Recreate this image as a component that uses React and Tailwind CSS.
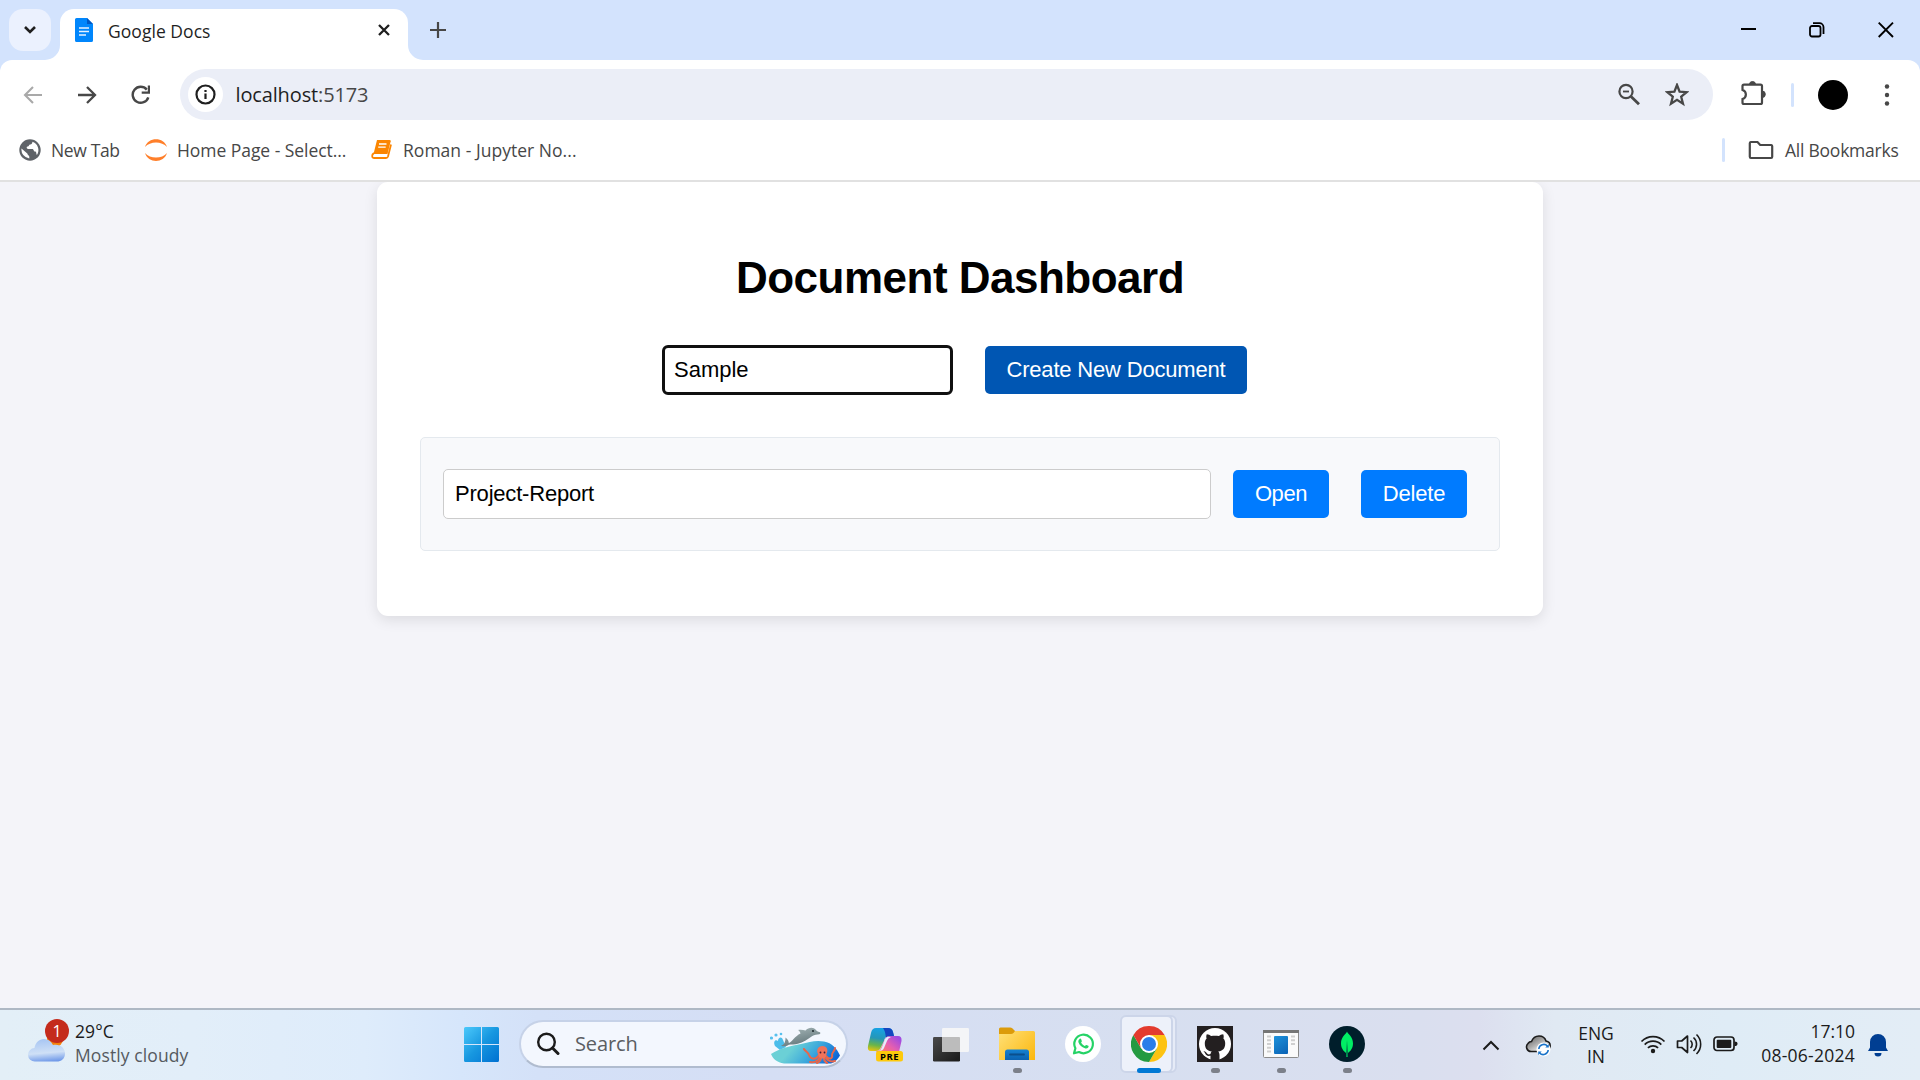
import React from "react";

const UI = "font-['Open_Sans',sans-serif]";

function Svg({ w, h, className = "", children }) {
  return (
    <svg
      width={w}
      height={h}
      viewBox={`0 0 ${w} ${h}`}
      fill="none"
      className={`shrink-0 ${className}`}
    >
      {children}
    </svg>
  );
}

function TabStrip() {
  return (
    <div className="flex h-[60px] items-start bg-[#d3e3fd] pt-[9px]">
      <button className="ml-[9px] flex size-[42px] items-center justify-center rounded-[14px] bg-[#ebf1fe]">
        <Svg w={12} h={8}>
          <path d="M1 1l5 5 5-5" stroke="#1f1f1f" strokeWidth="2.6" />
        </Svg>
      </button>

      <div className="relative ml-[9px] flex h-[51px] w-[348px] items-start rounded-t-[14px] bg-white">
        <Svg w={15} h={15} className="absolute -left-[15px] bottom-0">
          <path d="M15 0v15H0A15 15 0 0 0 15 0z" fill="#fff" />
        </Svg>
        <Svg w={15} h={15} className="absolute -right-[15px] bottom-0">
          <path d="M0 0v15h15A15 15 0 0 1 0 0z" fill="#fff" />
        </Svg>
        <Svg w={18} h={24} className="ml-[15px] mt-[9px]">
          <path d="M1.6 0H12l6 6v16.400a1.600 1.600 0 0 1-1.600 1.600H1.600A1.600 1.600 0 0 1 0 22.400V1.600A1.600 1.600 0 0 1 1.600 0z" fill="#0086fc" />
          <path d="M12 0l6 6h-6z" fill="#0057c2" />
          <path d="M4 10h10M4 13.500h10M4 17h7" stroke="#e6f2ff" strokeWidth="1.500" />
        </Svg>
        <span className="ml-[15px] mt-[9px] w-[249px] whitespace-nowrap text-[17.5px] leading-[26px] tracking-[0.04px] text-[#1f1f1f]">
          Google Docs
        </span>
        <Svg w={12} h={12} className="ml-[21px] mt-[15px]">
          <path d="M1 1l10 10M11 1L1 11" stroke="#1f1f1f" strokeWidth="2.3" />
        </Svg>
      </div>

      <Svg w={16} h={16} className="ml-[22px] mt-[13px]">
        <path d="M8 0v16M0 8h16" stroke="#474747" strokeWidth="2.200" />
      </Svg>

      <div className="ml-auto mr-[26px] flex items-start pt-[13px]">
        <Svg w={15} h={16}>
          <path d="M0 7h15" stroke="#000" strokeWidth="2" />
        </Svg>
        <Svg w={16} h={16} className="ml-[53px]">
          <rect x="1" y="4" width="10.500" height="10.500" rx="2" stroke="#000" strokeWidth="1.800" />
          <path d="M4 1.200h6.500A4 4 0 0 1 14.500 5v7" stroke="#000" strokeWidth="1.800" />
        </Svg>
        <Svg w={16} h={16} className="ml-[53px]">
          <path d="M.7.700l14.300 14.300M15 .700L.700 15" stroke="#000" strokeWidth="1.900" />
        </Svg>
      </div>
    </div>
  );
}

function AddressBar() {
  return (
    <div className="bg-[#d3e3fd]">
      <div className="flex h-[69px] items-center rounded-t-[12px] bg-white">
        <Svg w={20} h={18} className="ml-[23px]">
          <path d="M19 9H2.500M10 1L2 9l8 8" stroke="#a9a9a9" strokeWidth="2.100" />
        </Svg>
        <Svg w={20} h={18} className="ml-[34px]">
          <path d="M1 9h16.500M10 1l8 8-8 8" stroke="#474747" strokeWidth="2.300" />
        </Svg>
        <Svg w={20} h={20} className="ml-[34px]">
          <path d="M17.300 12.300A8 8 0 1 1 15.800 4.600" stroke="#474747" strokeWidth="2.400" />
          <path d="M17.900.500v7.200h-7.200" stroke="#474747" strokeWidth="2.200" />
        </Svg>
        <div className="ml-[29px] flex h-[51px] w-[1533px] items-center rounded-full bg-[#ebeef7]">
          <div className="ml-[8px] flex size-[35px] items-center justify-center rounded-full bg-white">
            <Svg w={21} h={21}>
              <circle cx="10.500" cy="10.500" r="9" stroke="#1f1f1f" strokeWidth="2.200" />
              <path d="M10.500 9.500V15M10.500 6v2" stroke="#1f1f1f" strokeWidth="2.200" />
            </Svg>
          </div>
          <span className="ml-[12.5px] mt-[0px] whitespace-nowrap text-[20px] leading-[28px] tracking-[-0.14px] text-[#1f1f1f]">
            localhost<span className="text-[#474747]">:5173</span>
          </span>
          <Svg w={24} h={24} className="ml-auto">
            <circle cx="9" cy="8.500" r="6.600" stroke="#474747" strokeWidth="2.200" />
            <path d="M14 13.500l8 7.800" stroke="#474747" strokeWidth="2.800" />
            <path d="M6 8.500h6" stroke="#474747" strokeWidth="1.800" />
          </Svg>
          <Svg w={24} h={24} className="ml-[24px] mr-[24px]">
            <path
              d="M12 2l2.600 6.700 7 .500-5.400 4.500 1.800 7L12 16.900l-6 3.800 1.800-7L2.400 9.200l7-.500z"
              stroke="#474747"
              strokeWidth="2.300"
            />
          </Svg>
        </div>
        <Svg w={26} h={26} className="ml-[27px] -mt-[4px]">
          <path
            d="M5 4.600h15.500a1.500 1.500 0 0 1 1.500 1.500V22.500a1.500 1.500 0 0 1-1.500 1.500H4a1.500 1.500 0 0 1-1.500-1.500V19c4.500-1.500 4.500-7.500 0-9V6.100A1.500 1.500 0 0 1 4 4.600z"
            stroke="#474747"
            strokeWidth="2.200"
          />
          <path d="M9.500 4.500a3 3 0 0 1 6 0zM22 11a3.300 3.300 0 0 1 0 6.600z" fill="#474747" stroke="#474747" />
        </Svg>
        <div className="ml-[25px] h-[24px] w-[3px] rounded-full bg-[#d3e3fd]" />
        <div className="ml-[24px] size-[30px] rounded-full bg-black" />
        <Svg w={6} h={22} className="ml-[36px]">
          <circle cx="3" cy="2.500" r="2.200" fill="#474747" />
          <circle cx="3" cy="11" r="2.200" fill="#474747" />
          <circle cx="3" cy="19.500" r="2.200" fill="#474747" />
        </Svg>
      </div>
    </div>
  );
}

function BookmarksBar() {
  return (
    <div className="flex h-[53px] items-center border-b-2 border-[#e1e1e1] bg-white pb-[10px] text-[17.5px] leading-[24px] whitespace-nowrap text-[#474747]">
      <Svg w={22} h={22} className="ml-[19px]">
        <circle cx="11" cy="11" r="10.700" fill="#5f6368" />
        <path
          d="M2.500 9.500L8 14.300c.900.800.500 1.700 1.600 2.100.900.300.700 2 .700 3A8.700 8.700 0 0 1 2.500 9.500zM13.300 2.700c.300 1.700-.600 2.600-2 2.700-1.700.100-1 2-2.700 2-1.500.100-1.100 2.500.600 2.500h4c1.800 0 1.200 2.700 2.900 2.700 1.500 0 1 2.500 1.800 3.300a8.700 8.700 0 0 0-4.600-13.200z"
          fill="#fff"
        />
      </Svg>
      <span className="ml-[10px] w-[83px] tracking-[-0.35px]">New Tab</span>
      <Svg w={24} h={24} className="ml-[10px]">
        <path d="M1 9C4-1.500 20-1.500 23 9 18 3 6 3 1 9zM1 15c3 10.500 19 10.500 22 0-5 6-17 6-22 0z" fill="#ff7f2a" />
      </Svg>
      <span className="ml-[9px] w-[184px] tracking-[-0.05px]">Home Page - Select...</span>
      <Svg w={21} h={19} className="ml-[10px]">
        <path d="M6 0h12.500q1.500 0 1.200 1.300L16.500 14H2.500z" fill="#fb8500" />
        <path d="M3 13l-1.500 1.500Q.500 18 3 18H15q1.500 0 2-1.500L20 4.500" stroke="#fb8500" strokeWidth="1.800" />
        <path d="M8 4h7.500M7.200 7.200h7.500" stroke="#fff" strokeWidth="1.300" />
      </Svg>
      <span className="ml-[11px] tracking-[0.03px]">Roman - Jupyter No...</span>
      <div className="ml-auto h-[24px] w-[3px] rounded-full bg-[#d3e3fd]" />
      <Svg w={26} h={20} className="ml-[23px]">
        <path
          d="M2.800 2h6.700l2.700 3h11A1.300 1.300 0 0 1 24.200 6.300v10.400A1.300 1.300 0 0 1 23 18H3a1.300 1.300 0 0 1-1.200-1.300V3.300A1.200 1.200 0 0 1 2.800 2z"
          stroke="#474747"
          strokeWidth="2.200"
        />
      </Svg>
      <span className="ml-[11px] w-[135px] tracking-[-0.24px]">All Bookmarks</span>
    </div>
  );
}

function Dashboard() {
  return (
    <main className="h-[826px] overflow-hidden bg-[#f4f4f9] font-['Liberation_Sans',sans-serif] text-black">
      <section className="mx-auto h-[434px] w-[1166px] rounded-[11px] bg-white px-[43px] pt-[71px] shadow-[0_4px_14px_rgba(0,0,0,0.1)]">
        <h1 className="text-center text-[44px] font-bold leading-[50px] tracking-[-0.5px]">Document Dashboard</h1>
        <div className="mt-[42px] flex items-start pl-[242px]">
          <div className="flex h-[50px] w-[291px] items-center rounded-[6px] border-[3px] border-[#101010] bg-white pl-[9px] text-[22px] leading-[26px]">
            Sample
          </div>
          <button className="ml-[32px] mt-[1px] h-[48px] w-[262px] rounded-[5px] bg-[#0056b3] text-[22px] leading-[26px] tracking-[-0.18px] text-white">
            Create New Document
          </button>
        </div>
        <div className="mt-[42px] flex h-[114px] items-center rounded-[5px] border border-[#e4e9ee] bg-[#f8f9fb] pl-[22px]">
          <div className="flex h-[50px] w-[768px] items-center rounded-[5px] border border-[#ccc] bg-white pl-[11px] text-[22px] leading-[26px] tracking-[-0.2px]">
            Project-Report
          </div>
          <button className="ml-[22px] h-[48px] w-[96px] rounded-[5px] bg-[#007bff] text-[22px] leading-[26px] tracking-[-0.4px] text-white">
            Open
          </button>
          <button className="ml-[32px] h-[48px] w-[106px] rounded-[5px] bg-[#007bff] text-[22px] leading-[26px] tracking-[-0.15px] text-white">
            Delete
          </button>
        </div>
      </section>
    </main>
  );
}

function WindowsLogo() {
  return (
    <Svg w={35} h={35}>
      <defs>
        <linearGradient id="win" x1="0" y1="0" x2="35" y2="35" gradientUnits="userSpaceOnUse">
          <stop stopColor="#4cc9fb" />
          <stop offset="0.5" stopColor="#1797e0" />
          <stop offset="1" stopColor="#0070d1" />
        </linearGradient>
      </defs>
      <path d="M1.500 0H17v17H0V1.500Q0 0 1.500 0zM18 0h15.500Q35 0 35 1.500V17H18zM0 18h17v17H1.500Q0 35 0 33.500zM18 18h17v15.500q0 1.500-1.500 1.500H18z" fill="url(#win)" />
    </Svg>
  );
}

function OceanArt() {
  return (
    <Svg w={70} h={37}>
      <defs>
        <linearGradient id="sea" x1="30" y1="12" x2="60" y2="38" gradientUnits="userSpaceOnUse">
          <stop stopColor="#6bd0d6" />
          <stop offset="0.5" stopColor="#3aa6dc" />
          <stop offset="1" stopColor="#0d66d6" />
        </linearGradient>
        <linearGradient id="dol" x1="30" y1="0" x2="34" y2="18" gradientUnits="userSpaceOnUse">
          <stop stopColor="#9fb0b2" />
          <stop offset="1" stopColor="#66797d" />
        </linearGradient>
      </defs>
      <path d="M5 19C3 15 5 12 8 14c0-4 4-5 5-1l3 7-6 3z" fill="#4cbdea" />
      <circle cx="1.500" cy="11" r="1.600" fill="#57c0ee" />
      <circle cx="6" cy="8" r="1.600" fill="#57c0ee" />
      <circle cx="11" cy="7" r="1.300" fill="#57c0ee" />
      <path d="M1 27c9-6 20-8 30-10 8-2 15-4 23-2.500 8 1.500 13 7 16 14-2 4-6 7-9 8H14C7 35.500 3 32 1 27z" fill="url(#sea)" />
      <path
        d="M11 18.500c3-.500 4.500-3 4.500-8 2 1.500 3.300 3.500 3.300 5.500C22 15 25 9 30.500 6.500 30 4.500 29 3.500 28 3c2.500-.500 5-.300 7.500.500C38.500.500 43-.500 46 3c.800 1.300 1.600 1.700 3.500 2 1.200.300 1.200 1.800-.200 2.200-2.500.500-4.800.500-7 1.800-5 3.500-9 6.500-14.500 7.700-3 .700-6.500.700-9 1-2.500 1.600-5.500 2.300-7.800.800z"
        fill="url(#dol)"
      />
      <circle cx="43" cy="4" r="1.100" fill="#1f2c30" />
      <path
        d="M49 28c-3 5-8 5-10 0-1-3-4-4-5-6M50 30c-2 4-6 6-10 5M56 29c3 4 7 3 6-1 0-3 3-4 3-7M56 31c2 3 6 4 9 3M51 31c0 3-2 4-4 5M54 31c0 3 1 4 3 5"
        stroke="#e8664a"
        strokeWidth="2"
        strokeLinecap="round"
      />
      <path d="M48 27c-2-4 0-8 4.500-8s6 4 4 8c-.500 3-1 4.500-4 4.500S49 30 48 27z" fill="#f0735a" />
      <circle cx="50.500" cy="25.500" r="0.900" fill="#3b1c3c" />
      <circle cx="54.500" cy="25.500" r="0.900" fill="#3b1c3c" />
    </Svg>
  );
}

function CopilotIcon() {
  return (
    <div className="relative h-[35px] w-[36px]">
      <Svg w={36} h={35}>
        <defs>
          <linearGradient id="cpA" x1="10" y1="0" x2="6" y2="24" gradientUnits="userSpaceOnUse">
            <stop stopColor="#16a3e8" />
            <stop offset="0.45" stopColor="#2597b8" />
            <stop offset="0.75" stopColor="#69b54a" />
            <stop offset="1" stopColor="#e9c40d" />
          </linearGradient>
          <linearGradient id="cpB" x1="30" y1="10" x2="16" y2="27" gradientUnits="userSpaceOnUse">
            <stop stopColor="#a14be0" />
            <stop offset="0.5" stopColor="#e55fb0" />
            <stop offset="1" stopColor="#ff7d62" />
          </linearGradient>
        </defs>
        <path d="M9 1h12q4 0 5 4l1 4h-5q-4 0-5 5l-4 8q-1 2-4 2H4q-4 0-3-5L4 6q1-5 5-5z" fill="url(#cpA)" />
        <path d="M16 1h5q4 0 5 4l1 4h-4q-3 0-4 2-1-8-3-10z" fill="#1546c0" />
        <path d="M24 9h7q4 0 3.500 5L32 25H11q-2 0-2-1 3 0 4-1l5-11q1-3 6-3z" fill="url(#cpB)" />
        <path d="M20 10h4q-3 1-4 4l-3 7q-1 3-5 3 2-1 3-4l3-8z" fill="#e6ecfa" />
        <rect x="9" y="24" width="27" height="10.500" rx="2.500" fill="#fdc90b" />
      </Svg>
      <span className="absolute left-[9px] top-[24px] w-[27px] text-center text-[9.5px] font-bold leading-[11px] tracking-[0.4px] text-black">PRE</span>
    </div>
  );
}

function TaskViewIcon() {
  return (
    <Svg w={36} h={35}>
      <defs>
        <linearGradient id="tvD" x1="0" y1="10" x2="20" y2="35" gradientUnits="userSpaceOnUse">
          <stop stopColor="#4a4a4a" />
          <stop offset="1" stopColor="#1e1e1e" />
        </linearGradient>
      </defs>
      <rect x="0" y="10" width="27" height="24.500" rx="1.200" fill="url(#tvD)" />
      <rect x="9" y="1" width="27" height="24" rx="1.200" fill="#f7f7f7" opacity="0.9" />
      <path d="M9 10h17q1 0 1 1v14H10q-1 0-1-1z" fill="#bcbcbc" />
    </Svg>
  );
}

function FolderIcon() {
  return (
    <Svg w={36} h={34}>
      <defs>
        <linearGradient id="fold" x1="2" y1="4" x2="34" y2="34" gradientUnits="userSpaceOnUse">
          <stop stopColor="#ffdf74" />
          <stop offset="1" stopColor="#fbb80f" />
        </linearGradient>
        <linearGradient id="foldB" x1="18" y1="22" x2="18" y2="34" gradientUnits="userSpaceOnUse">
          <stop stopColor="#1583d3" />
          <stop offset="1" stopColor="#0a5fae" />
        </linearGradient>
      </defs>
      <path d="M0 2Q0 .500 1.500.500H11q1.500 0 2.500 1L16 4v4H0z" fill="#dc9b0a" />
      <path d="M0 7h12q1.500 0 2.500-1L16 4h18.500Q36 4 36 5.500V33H0z" fill="url(#fold)" />
      <path d="M6 33v-8q0-2.500 2.500-2.500h19Q30 22.500 30 25v8z" fill="url(#foldB)" />
      <path d="M11 27.500h14" stroke="#0b4f8c" strokeWidth="1.800" strokeLinecap="round" />
    </Svg>
  );
}

function WhatsAppIcon() {
  return (
    <Svg w={36} h={36}>
      <circle cx="18" cy="18" r="18" fill="#fff" />
      <path d="M9 27.300l1.400-5A9.300 9.300 0 1 1 14 26z" stroke="#25d366" strokeWidth="2.200" strokeLinejoin="round" />
      <path d="M14.600 12.900c.500-.500 1.300-.300 1.500.200l.700 1.800c.200.700-.700 1.300-.700 1.700.700 1.500 2 2.700 3.600 3.300.500 0 1.100-1.200 1.700-1l1.900.900c.500.300.300 1-.100 1.600-.700 1-2.200 1.200-3.300.800-3.100-1-5.300-3.100-6.400-5.800-.400-1.300-.100-2.600 1.100-3.500z" fill="#25d366" />
    </Svg>
  );
}

function ChromeIcon() {
  return (
    <Svg w={36} h={36}>
      <path d="M18 9h15.590A18 18 0 0 1 18 36l7.790-13.500z" fill="#fdc312" />
      <path d="M10.200 22.500L2.410 9A18 18 0 0 0 18 36l7.790-13.500z" fill="#249a41" />
      <path d="M2.410 9l7.800 13.500L18 9h15.590A18 18 0 0 0 2.410 9z" fill="#e33b2e" />
      <circle cx="18" cy="18" r="9" fill="#fff" />
      <circle cx="18" cy="18" r="7" fill="#2b7de9" />
    </Svg>
  );
}

function GitHubIcon() {
  return (
    <Svg w={36} h={36}>
      <path d="M0 0h36v36H0z" fill="#231f20" />
      <circle cx="18" cy="18" r="16" fill="#fff" />
      <path
        d="M13.500 34v-4.200c-3.600.700-4.700-1-5.400-2.500-.500-1-1.200-1.500-1.700-2 1.800-.500 2.800 1.200 3.600 2.200 1.100 1.200 2.300 1 3.500.600.200-1.200.600-1.900 1.300-2.500-4.300-.600-7-2.800-7-8 0-2 .500-3.700 1.800-5-.500-1.300-.400-3 .200-4.400 1.800 0 3.200 1 4.400 1.900 2.500-.600 5.100-.600 7.600 0 1.200-.900 2.600-1.900 4.400-1.900.600 1.400.700 3.100.200 4.400 1.300 1.300 1.800 3 1.800 5 0 5.200-2.700 7.400-7 8 1 1 1.300 2.200 1.300 3.700V34z"
        fill="#231f20"
      />
    </Svg>
  );
}

function RunWindowIcon() {
  return (
    <Svg w={36} h={28}>
      <defs>
        <linearGradient id="rw" x1="11" y1="5" x2="25" y2="24" gradientUnits="userSpaceOnUse">
          <stop stopColor="#1d93dc" />
          <stop offset="1" stopColor="#0b62b4" />
        </linearGradient>
      </defs>
      <rect x="0.500" y="0.500" width="35" height="27" rx="1" fill="#fafafa" stroke="#8c8c8c" />
      <path d="M0 1.500h36" stroke="#757575" strokeWidth="3" />
      <rect x="11" y="6" width="14" height="18" rx="1" fill="url(#rw)" />
      <path d="M4 6.500h4M4 10.300h4M4 14h4M4 17.700h4M4 21.400h4M28 6.500h4M28 10.300h4M28 14h4" stroke="#cfcfcf" strokeWidth="2" />
    </Svg>
  );
}

function MongoIcon() {
  return (
    <Svg w={36} h={36}>
      <circle cx="18" cy="18" r="18" fill="#001e2b" />
      <path d="M18 5.500c.700 2.500 6 5 6 12 0 5-3 8-5 9.500L18.600 31h-1.200L17 27c-2-1.500-5-4.500-5-9.500 0-7 5.300-9.500 6-12z" fill="#00ed64" />
      <path d="M18 14l.900 13-.400 3.500h-.900L17.200 27z" fill="#00684a" />
    </Svg>
  );
}

function TaskCell({ children, running = false }) {
  return (
    <div className="relative flex h-full w-[66px] items-center justify-center pb-[2px]">
      {children}
      {running && <div className="absolute bottom-[7px] left-[29px] h-[5px] w-[9px] rounded-full bg-[#7c808a]" />}
    </div>
  );
}

function Taskbar() {
  return (
    <div
      className={`${UI} flex h-[72px] items-center border-t-2 border-[#aeb8c4] bg-linear-[90deg,#e3eff7_0%,#e2eef9_10%,#deecfb_19%,#d6e6fb_24%,#d4e1f8_28%,#d5def4_40%,#d7dff0_60%,#dadfef_74%,#dcdfef_77%,#e0e9f3_81%,#dfecf6_90%,#e3edf6_100%] text-[17.5px] leading-[24px] whitespace-nowrap text-[#1b1b1b]`}
    >
      <div className="flex w-[463px] items-center">
        <div className="relative -mt-[8px] ml-[28px] h-[44px] w-[42px]">
          <Svg w={42} h={44}>
            <defs>
              <linearGradient id="cld" x1="18" y1="20" x2="20" y2="43" gradientUnits="userSpaceOnUse">
                <stop stopColor="#a8c6f3" />
                <stop offset="0.6" stopColor="#cfe0f6" />
                <stop offset="1" stopColor="#6b96e8" />
              </linearGradient>
            </defs>
            <circle cx="27" cy="20" r="8" fill="#f5820b" />
            <path d="M7 42.500a6.500 6.500 0 0 1-.500-13.500C7.500 23.500 11 20 16 20c4 0 7 2 9 6 7-1.500 12 3 12 8.500s-4 8-8 8z" fill="url(#cld)" />
          </Svg>
          <div className="absolute left-[17px] top-0 flex size-[24px] items-center justify-center rounded-full bg-[#c42b1c] text-[16px] leading-[24px] text-white">1</div>
        </div>
        <div className="-mt-[4px] ml-[5px] flex flex-col">
          <span className="tracking-[0.1px]">29°C</span>
          <span className="tracking-[0.1px] text-[#565a5f]">Mostly cloudy</span>
        </div>
      </div>

      <div className="ml-[1px] -mt-px">
        <WindowsLogo />
      </div>
      <div className="ml-[20px] -mt-[2px] flex h-[48px] w-[329px] items-center rounded-full border-2 border-[#c6d2e8] border-b-[#b0bccf] bg-[#f3f7fe]">
        <Svg w={24} h={24} className="ml-[15px]">
          <circle cx="10.500" cy="10" r="8.300" stroke="#1b1b1b" strokeWidth="2.400" />
          <path d="M16.500 16l5.500 5.500" stroke="#1b1b1b" strokeWidth="3" strokeLinecap="round" />
        </Svg>
        <span className="ml-[15px] text-[20px] leading-[28px] tracking-[-0.1px] text-[#5a5d62]">Search</span>
        <div className="ml-auto mr-[6px] mt-[2px]">
          <OceanArt />
        </div>
      </div>

      <div className="ml-[4px] flex h-full">
        <TaskCell><CopilotIcon /></TaskCell>
        <TaskCell><TaskViewIcon /></TaskCell>
        <TaskCell running><FolderIcon /></TaskCell>
        <TaskCell><WhatsAppIcon /></TaskCell>
        <div className="relative flex h-full w-[66px] items-center justify-center pb-[2px]">
          <div className="absolute left-[12px] top-[5px] h-[58px] w-[49px] rounded-[6px] border-2 border-[#ccd5e9] bg-[#e6ebf7]" />
          <div className="absolute left-[4px] top-[5px] h-[58px] w-[53px] rounded-[6px] border-2 border-[#ccd5e9] bg-[#edf1fa]" />
          <div className="relative"><ChromeIcon /></div>
          <div className="absolute bottom-[7px] left-[21px] h-[5px] w-[24px] rounded-full bg-[#0078d4]" />
        </div>
        <TaskCell running><GitHubIcon /></TaskCell>
        <TaskCell running><RunWindowIcon /></TaskCell>
        <TaskCell running><MongoIcon /></TaskCell>
      </div>

      <Svg w={18} h={11} className="ml-[102px]">
        <path d="M1.500 9.500L9 2l7.500 7.500" stroke="#1b1b1b" strokeWidth="2" />
      </Svg>
      <Svg w={27} h={24} className="ml-[25px]">
        <defs>
          <linearGradient id="od" x1="5" y1="4" x2="14" y2="19" gradientUnits="userSpaceOnUse">
            <stop stopColor="#6a6a6a" />
            <stop offset="0.5" stopColor="#a9a9a9" />
            <stop offset="1" stopColor="#f0f0f0" />
          </linearGradient>
        </defs>
        <path d="M6 18.500c-4 0-6-5-3-8C4 9 5 8.500 6.500 8.500 8 4.500 11 3 14 3c3.500 0 6 2 7 5 3 .500 4.500 3 4 6-1 3-3 4.500-5 4.500z" fill="url(#od)" stroke="#1b1b1b" strokeWidth="1.600" />
        <circle cx="18.500" cy="16.500" r="7" fill="#fff" />
        <path d="M13.800 16a5 5 0 0 1 8.600-3M23.200 17a5 5 0 0 1-8.600 3" stroke="#1a73c9" strokeWidth="1.600" />
        <path d="M23.800 11v3.500h-3.500zM13.200 22v-3.500h3.500z" fill="#1a73c9" />
      </Svg>
      <div className="ml-[22px] flex w-[44px] flex-col items-center">
        <span className="leading-[23px]">ENG</span>
        <span className="leading-[23px]">IN</span>
      </div>
      <Svg w={26} h={20} className="ml-[22px] -mt-[2px]">
        <path d="M1.500 7.500a16 16 0 0 1 23 0M4.700 10.700a11.600 11.600 0 0 1 16.600 0M7.900 13.900a7.300 7.300 0 0 1 10.200 0" stroke="#1b1b1b" strokeWidth="1.700" />
        <circle cx="13" cy="17" r="2.200" fill="#1b1b1b" />
      </Svg>
      <Svg w={26} h={22} className="ml-[10px] -mt-[2px]">
        <path d="M1.500 8v6.500h4.200l5.800 5V3l-5.800 5z" stroke="#1b1b1b" strokeWidth="1.700" strokeLinejoin="round" />
        <path d="M14.500 7.500a5 5 0 0 1 0 7.500M17.500 4.500a9 9 0 0 1 0 13.500M20.500 1.500a13.500 13.500 0 0 1 0 19.500" stroke="#1b1b1b" strokeWidth="1.600" />
      </Svg>
      <Svg w={25} h={16} className="ml-[11px] -mt-[2px]">
        <rect x="1" y="1" width="20" height="13.500" rx="3" stroke="#1b1b1b" strokeWidth="1.700" />
        <rect x="3.700" y="3.700" width="14.600" height="8.200" rx="1" fill="#1b1b1b" />
        <path d="M21.500 5.500q3 0 3 2.300t-3 2.300z" fill="#1b1b1b" />
      </Svg>
      <div className="-mt-[4px] ml-auto flex flex-col items-end">
        <span>17:10</span>
        <span className="tracking-[0.25px]">08-06-2024</span>
      </div>
      <Svg w={20} h={24} className="ml-[13px] mr-[32px]">
        <path d="M0 18l2-3.500V9a8 8 0 0 1 16 0v5.500l2 3.500zM6.500 20h7a3.500 3.500 0 0 1-7 0z" fill="#003e92" />
      </Svg>
    </div>
  );
}

export default function App() {
  return (
    <div className="flex h-[1080px] w-[1920px] flex-col overflow-hidden bg-white">
      <div className={UI}>
        <TabStrip />
        <AddressBar />
        <BookmarksBar />
      </div>
      <Dashboard />
      <Taskbar />
    </div>
  );
}
